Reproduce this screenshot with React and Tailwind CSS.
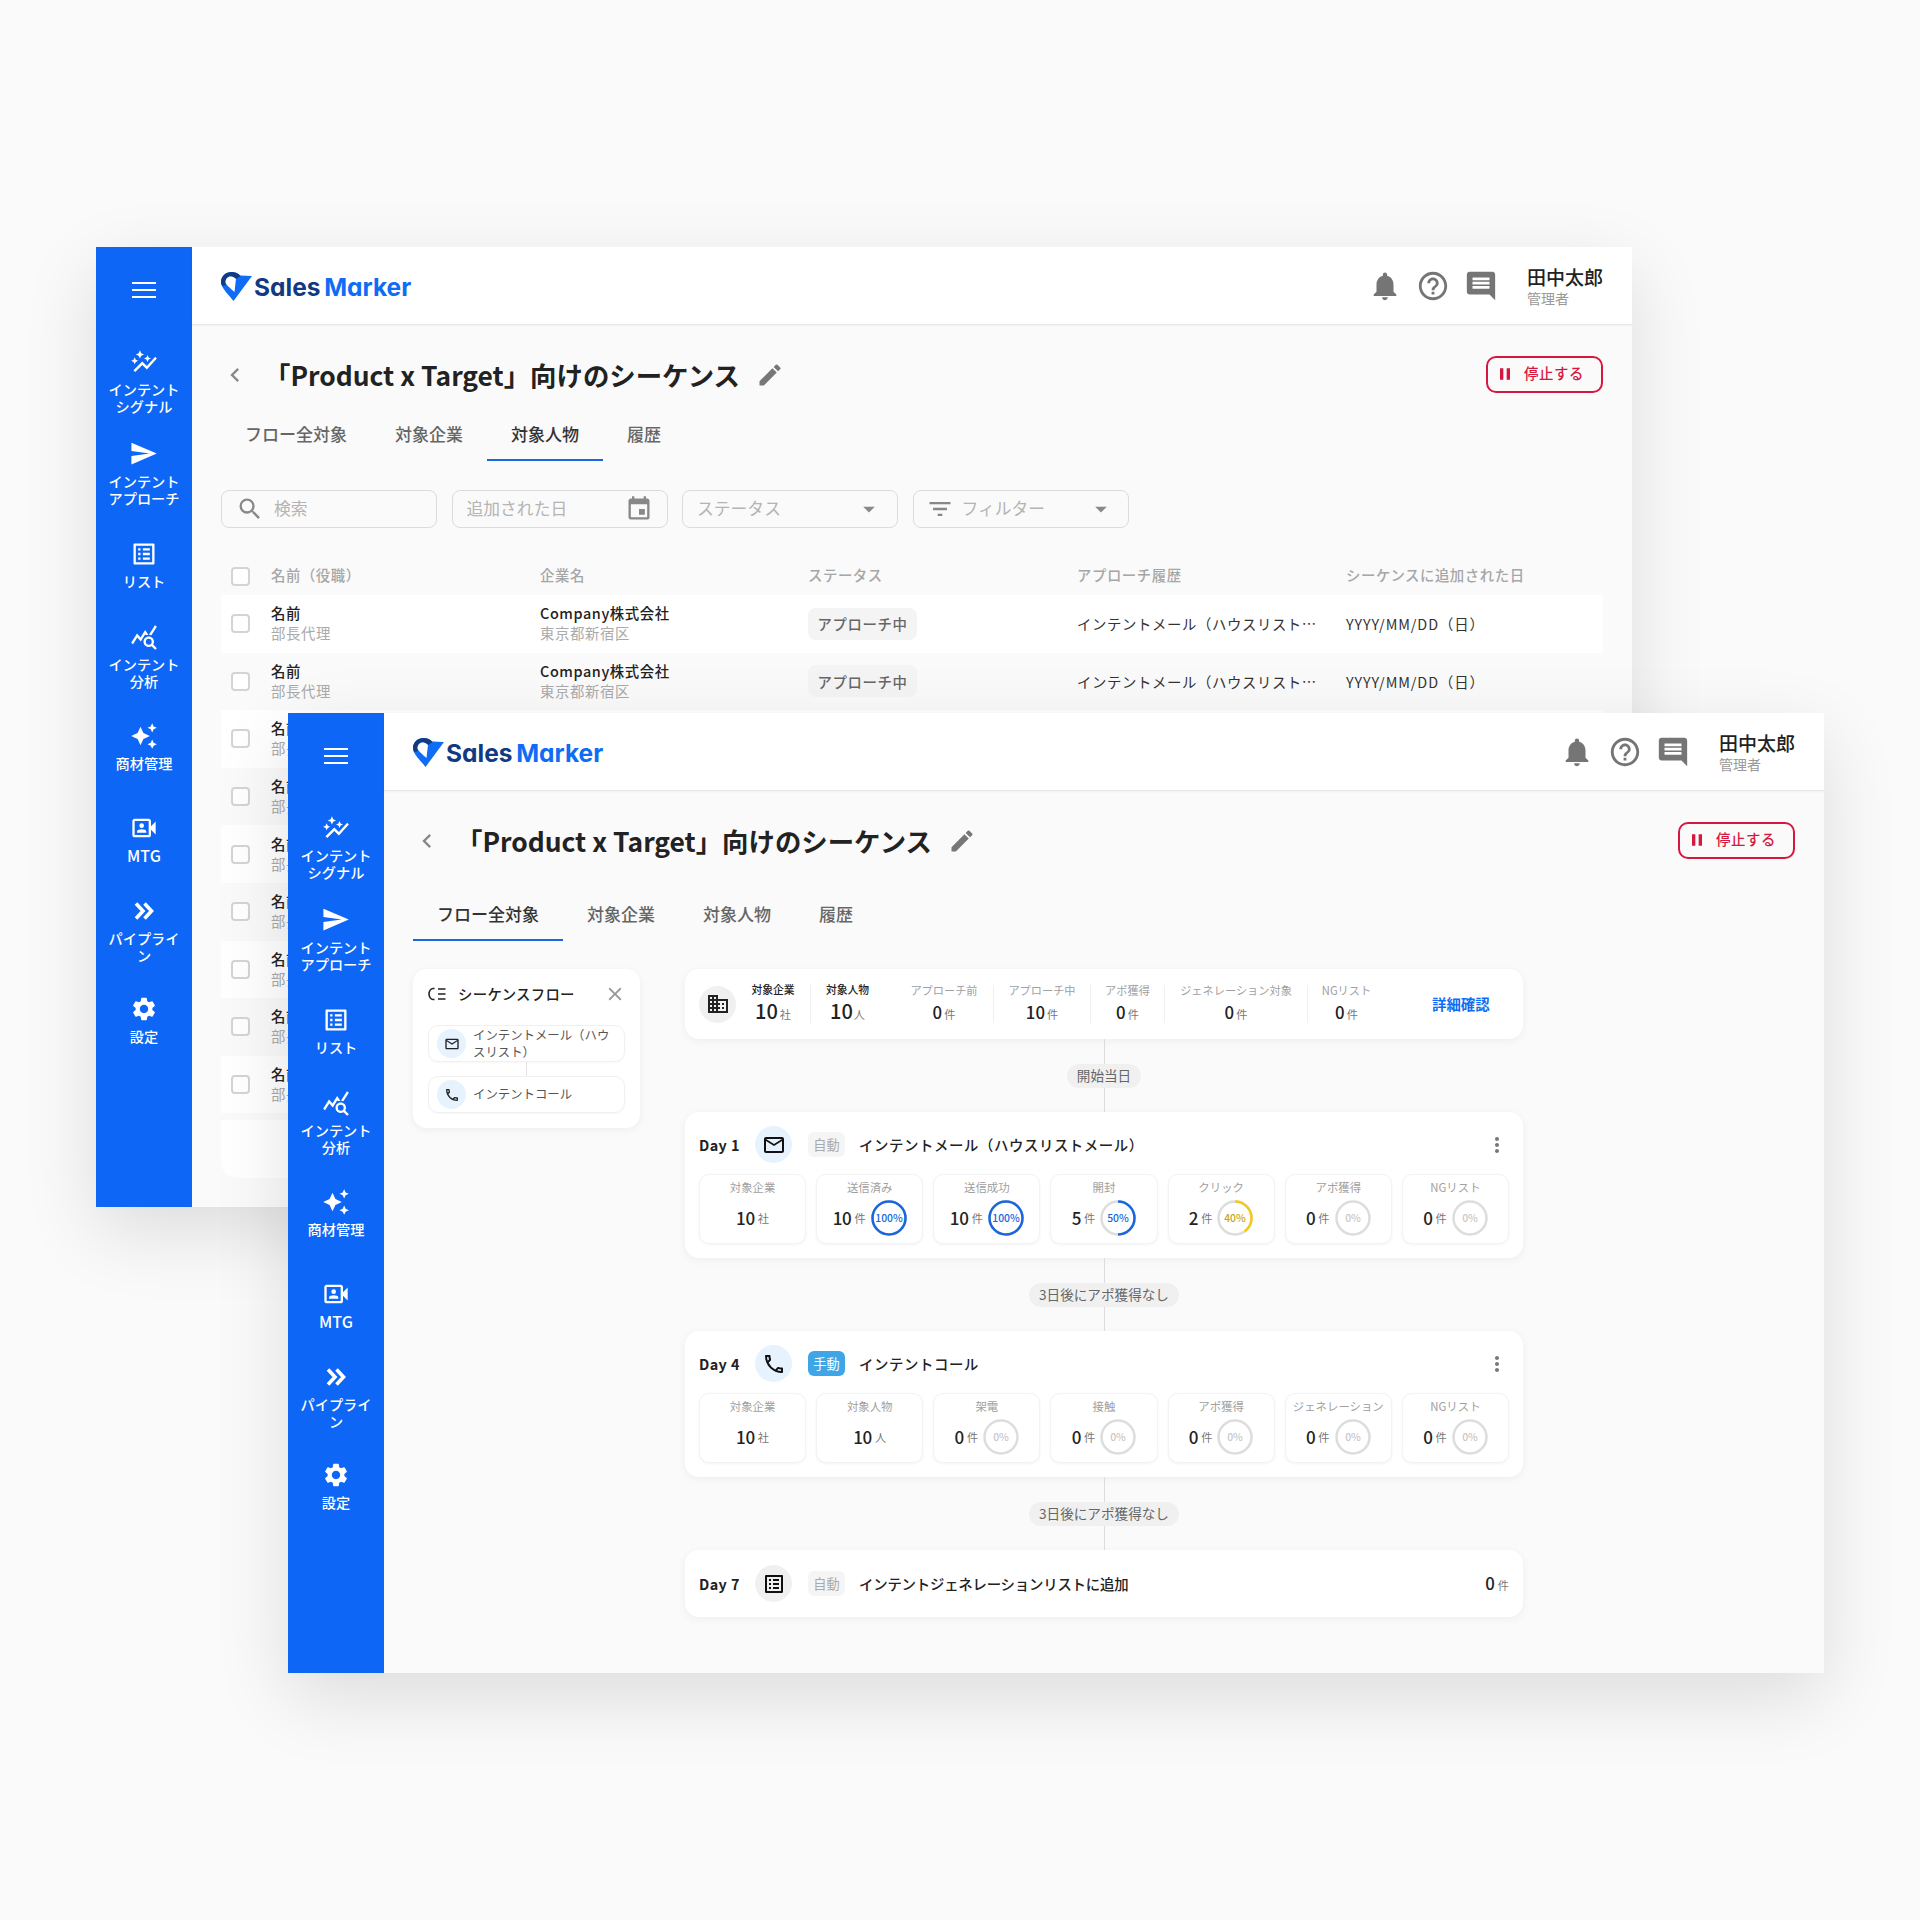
import {
  MdAutoAwesome,
  MdAutoGraph,
  MdArrowDropDown,
  MdChevronLeft,
  MdClose,
  MdComment,
  MdDomain,
  MdEdit,
  MdEvent,
  MdFilterList,
  MdHelpOutline,
  MdMailOutline,
  MdMoreVert,
  MdNotifications,
  MdOutlineListAlt,
  MdOutlinePhone,
  MdOutlineVideoCameraFront,
  MdPause,
  MdQueryStats,
  MdSearch,
  MdSend,
  MdSettings,
} from "react-icons/md";

// fat double chevron, the icon-package one is too thin
function PipelineIcon({ size }) {
  return (
    <svg width={size} height={size} viewBox="0 0 28 28" fill="none" stroke="currentColor" strokeWidth="3.6">
      <path d="M6 6.5L13 14L6 21.5" />
      <path d="M14.5 6.5L21.5 14L14.5 21.5" />
    </svg>
  );
}

const navItems = [
  { icon: MdAutoGraph, lines: ["インテント", "シグナル"], cls: "mt-[44px]" },
  { icon: MdSend, lines: ["インテント", "アプローチ"], cls: "mt-[24px]" },
  { icon: MdOutlineListAlt, lines: ["リスト"], cls: "mt-[33px]" },
  { icon: MdQueryStats, lines: ["インテント", "分析"], cls: "mt-[33px]" },
  { icon: MdAutoAwesome, lines: ["商材管理"], cls: "mt-[32px]" },
  { icon: MdOutlineVideoCameraFront, lines: ["MTG"], cls: "mt-[42px]", labelCls: "text-[16px]" },
  { icon: PipelineIcon, lines: ["パイプライ", "ン"], cls: "mt-[33px]" },
  { icon: MdSettings, lines: ["設定"], cls: "mt-[31px]" },
];

const tabs = ["フロー全対象", "対象企業", "対象人物", "履歴"];

const day1Metrics = [
  { label: "対象企業", value: "10", unit: "社" },
  { label: "送信済み", value: "10", unit: "件", pct: 100, color: "#1a66dc", text: "#1a66dc" },
  { label: "送信成功", value: "10", unit: "件", pct: 100, color: "#1a66dc", text: "#1a66dc" },
  { label: "開封", value: "5", unit: "件", pct: 50, color: "#1a66dc", text: "#1a66dc" },
  { label: "クリック", value: "2", unit: "件", pct: 40, color: "#f5c91a", text: "#c9a516" },
  { label: "アポ獲得", value: "0", unit: "件", pct: 0 },
  { label: "NGリスト", value: "0", unit: "件", pct: 0 },
];

const day4Metrics = [
  { label: "対象企業", value: "10", unit: "社" },
  { label: "対象人物", value: "10", unit: "人" },
  { label: "架電", value: "0", unit: "件", pct: 0 },
  { label: "接触", value: "0", unit: "件", pct: 0 },
  { label: "アポ獲得", value: "0", unit: "件", pct: 0 },
  { label: "ジェネレーション", value: "0", unit: "件", pct: 0 },
  { label: "NGリスト", value: "0", unit: "件", pct: 0 },
];

const summary = [
  { label: "アプローチ前", value: "0", cls: "w-[98px] ml-[11px]" },
  { label: "アプローチ中", value: "10", cls: "w-[97px] border-l" },
  { label: "アポ獲得", value: "0", cls: "w-[74px] border-l" },
  { label: "ジェネレーション対象", value: "0", cls: "w-[143px] border-l" },
  { label: "NGリスト", value: "0", cls: "w-[78px] border-l" },
];

function Logo() {
  return (
    <div className="flex items-center mt-[3px]">
      <svg width="32" height="30" viewBox="0 0 32 30">
        <path d="M0 10C0 4 5 0 10.5 0C14 0 17 1 19 3.5L31 4L12.5 29C8 23 0 16 0 10Z" fill="#0f6cf5" />
        <path d="M0 10C0 4 5 0 10.5 0C14 0 17 1 19.5 4L15 7C13 5 11 4.5 9.5 4.5C6.5 4.5 4.5 7 4.5 10C4.5 11 4.7 12 5 13L1.2 14C0.5 12.5 0 11 0 10Z" fill="#123a82" />
        <path d="M4.5 10C4.5 7 6.5 4.5 9.5 4.5C11 4.5 13 5 15 7L14.5 11L13.5 20C10 16.5 4.5 13 4.5 10Z" fill="#fff" />
      </svg>
      <div className="ml-[1px] text-[24.5px] leading-none font-bold [word-spacing:-2px] font-['Inter',sans-serif] [font-feature-settings:'cv11']">
        <span className="text-[#123a82]">Sales</span>{" "}
        <span className="text-[#0f6cf5]">Marker</span>
      </div>
    </div>
  );
}

function Sidebar() {
  return (
    <aside className="w-24 shrink-0 bg-[#0d66f5] flex flex-col items-center text-white">
      <svg className="mt-[29px] shrink-0" width="28" height="28" viewBox="0 0 28 28" stroke="#fff" strokeWidth="2">
        <path d="M2 7H26M2 14H26M2 21H26" />
      </svg>
      {navItems.map((item) => (
        <div key={item.lines[0] + item.lines.length + item.cls} className={`${item.cls} flex flex-col items-center`}>
          <item.icon size={item.icon === MdSend ? 29 : 28} />
          <div className={`mt-[5px] leading-[17px] font-medium text-center whitespace-nowrap ${item.labelCls || "text-[14.2px]"}`}>
            {item.lines.map((l) => (
              <div key={l}>{l}</div>
            ))}
          </div>
        </div>
      ))}
    </aside>
  );
}

function Header() {
  return (
    <header className="h-[78px] shrink-0 bg-white border-b border-[#e6e6e6] shadow-[0_1px_2px_rgba(0,0,0,0.04)] flex items-center pl-[29px] pr-[29px]">
      <Logo />
      <div className="ml-auto mt-[1px] flex items-center gap-[14px] text-[#757575]">
        <MdNotifications size={34} />
        <MdHelpOutline size={34} />
        <MdComment size={34} />
      </div>
      <div className="ml-[29px] w-[76px]">
        <div className="text-[19px] leading-[24px] font-medium text-[#222]">田中太郎</div>
        <div className="text-[14px] leading-[18px] text-[#999]">管理者</div>
      </div>
    </header>
  );
}

function TitleRow() {
  return (
    <div className="mt-[30px] h-[40px] flex items-center">
      <MdChevronLeft size={28} className="text-[#888]" />
      <h1 className="ml-[15px] text-[26.4px] leading-[40px] font-semibold text-[#222]">
        「Product x Target」向けのシーケンス
      </h1>
      <MdEdit size={28} className="ml-[16px] text-[#777]" />
      <button className="ml-auto mb-[2px] w-[117px] h-[37px] border-2 border-[#d6173f] rounded-[10px] flex items-center pl-[7px] text-[#d6173f] text-[14.4px] font-medium">
        <MdPause size={20} />
        <span className="ml-[9px] mb-[2px] tracking-[0.6px]">停止する</span>
      </button>
    </div>
  );
}

function Tabs({ active, className }) {
  return (
    <div className={`${className} flex h-[52px]`}>
      {tabs.map((t, i) => (
        <div
          key={t}
          className={`px-6 pb-[1px] flex items-center text-[17px] font-medium border-b-2 ${
            i === active ? "border-[#1a66dc] text-[#333]" : "border-transparent text-[#666]"
          }`}
        >
          {t}
        </div>
      ))}
    </div>
  );
}

function Checkbox() {
  return <div className="ml-[10px] w-[19px] h-[19px] rounded-[4px] border-2 border-[#d4d4d4] bg-white" />;
}

function Field({ children }) {
  return (
    <div className="w-[216px] h-[38px] border border-[#dcdcdc] rounded-[8px] flex items-center text-[16.8px] text-[#b4b4b4]">
      {children}
    </div>
  );
}

function PeopleTab() {
  const rows = [0, 1, 2, 3, 4, 5, 6, 7, 8];
  const gridCols = "grid grid-cols-[50px_269px_268px_269px_269px_1fr] items-center";
  return (
    <>
      <Tabs active={2} className="mt-[14px]" />
      <div className="mt-[29px] flex gap-[14.5px]">
        <Field>
          <MdSearch size={28} className="ml-[14px] text-[#888]" />
          <span className="ml-[10px]">検索</span>
        </Field>
        <Field>
          <span className="ml-[14px]">追加された日</span>
          <MdEvent size={28} className="ml-auto mr-[14px] text-[#888]" />
        </Field>
        <Field>
          <span className="ml-[14px]">ステータス</span>
          <MdArrowDropDown size={28} className="ml-auto mr-[14px] text-[#888]" />
        </Field>
        <Field>
          <MdFilterList size={28} className="ml-[12px] text-[#888]" />
          <span className="ml-[8px]">フィルター</span>
          <MdArrowDropDown size={28} className="ml-auto mr-[13px] text-[#888]" />
        </Field>
      </div>
      <div className={`${gridCols} mt-[29px] h-[38px] text-[14.4px] font-medium text-[#a6a6a6] tracking-[0.55px]`}>
        <Checkbox />
        <div className="mb-[2px]">名前（役職）</div>
        <div className="mb-[2px]">企業名</div>
        <div className="mb-[2px]">ステータス</div>
        <div className="mb-[2px]">アプローチ履歴</div>
        <div className="mb-[2px]">シーケンスに追加された日</div>
      </div>
      {rows.map((r) => (
        <div key={r} className={`${gridCols} h-[57.6px] tracking-[0.6px] text-[14.4px] ${r % 2 === 0 ? "bg-white" : "bg-[#fafafa]"}`}>
          <Checkbox />
          {/* rows from the third on sit under the front window, only their start shows */}
          <div className={`leading-[20px] mb-[1px] ${r > 1 ? "w-[17px] overflow-hidden whitespace-nowrap" : ""}`}>
            <div className="font-medium text-[#222]">名前</div>
            <div className="text-[#aaa]">部長代理</div>
          </div>
          {r < 2 && (
            <>
              <div className="leading-[20px] mb-[1px]">
                <div className="font-medium text-[#222]">Company株式会社</div>
                <div className="text-[#aaa]">東京都新宿区</div>
              </div>
              <div className="w-[109px] h-[32px] rounded-[8px] bg-[#f4f4f4] flex items-center justify-center font-medium text-[#666]">
                アプローチ中
              </div>
              <div className="text-[#333]">インテントメール（ハウスリスト…</div>
              <div className="text-[#333] tracking-[0.9px]">YYYY/MM/DD（日）</div>
            </>
          )}
        </div>
      ))}
      <div className="mt-[7px] h-[58px] bg-white rounded-b-[16px]" />
    </>
  );
}

function Ring({ pct, color = "#ddd", text = "#c8c8c8" }) {
  return (
    <svg width="36" height="36" viewBox="0 0 36 36" className="ml-[5px] shrink-0">
      <circle cx="18" cy="18" r="16.5" fill="none" stroke="#ddd" strokeWidth="2.5" />
      {pct > 0 && (
        <circle
          cx="18"
          cy="18"
          r="16.5"
          fill="none"
          stroke={color}
          strokeWidth="2.5"
          pathLength="100"
          strokeDasharray={`${pct} 100`}
          transform="rotate(-90 18 18)"
        />
      )}
      <text x="18" y="21.5" textAnchor="middle" fontSize="10.4" fontWeight="500" fill={text}>
        {pct}%
      </text>
    </svg>
  );
}

function Metric({ label, value, unit, pct, color, text }) {
  return (
    <div className="h-[70px] rounded-[10px] bg-white border border-[#f3f3f3] shadow-[0_1px_3px_rgba(0,0,0,0.05)] flex flex-col items-center">
      <div className="mt-[4px] h-[16px] text-[11.4px] leading-[16px] text-[#a0a0a0] whitespace-nowrap">{label}</div>
      <div className="mt-[5px] h-[36px] flex items-center justify-center">
        <span className="text-[17px] font-medium text-[#222] tracking-[-0.3px]">{value}</span>
        <span className="ml-[3px] text-[11.2px] text-[#777]">{unit}</span>
        {pct !== undefined && <Ring pct={pct} color={color} text={text} />}
      </div>
    </div>
  );
}

function Link({ label }) {
  return (
    <div className="h-[73px] flex flex-col items-center">
      <div className="w-px flex-1 bg-[#dcdcdc]" />
      <div className="h-[24px] px-[10px] rounded-full bg-[#f0f0f0] flex items-center justify-center text-[13.6px] text-[#666]">
        {label}
      </div>
      <div className="w-px flex-1 bg-[#dcdcdc]" />
    </div>
  );
}

function StepHeader({ day, icon: Icon, grey, manual, title, titleCls = "tracking-[0.6px]", children }) {
  return (
    <div className="h-[37px] flex items-center">
      <div className="w-[56px] text-[14.4px] font-semibold text-[#222] tracking-[0.4px]">{day}</div>
      <div className={`w-[37px] h-[37px] rounded-full flex items-center justify-center text-[#111] ${grey ? "bg-[#f0f0f0]" : "bg-[#e6f2fd]"}`}>
        <Icon size={24} />
      </div>
      <div
        className={`ml-[16px] w-[37px] h-[25px] rounded-[6px] flex items-center justify-center text-[13.2px] ${
          manual ? "bg-[#3ea6e6] text-white" : "bg-[#f5f5f5] text-[#aaa]"
        }`}
      >
        {manual ? "手動" : "自動"}
      </div>
      <div className={`ml-[14px] text-[14.4px] font-medium text-[#222] ${titleCls}`}>{title}</div>
      {children}
    </div>
  );
}

function StepCard({ metrics, ...head }) {
  return (
    <div className="rounded-[14px] bg-white shadow-[0_2px_8px_rgba(0,0,0,0.05)] px-[14px] pt-[14px] pb-[14px]">
      <StepHeader {...head}>
        <MdMoreVert size={24} className="ml-auto text-[#777]" />
      </StepHeader>
      <div className="mt-[11px] grid grid-cols-7 gap-[10px]">
        {metrics.map((m) => (
          <Metric key={m.label} {...m} />
        ))}
      </div>
    </div>
  );
}

function SeqItem({ icon: Icon, children }) {
  return (
    <div className="h-[37px] rounded-[10px] border border-[#f0f0f0] flex items-center pl-[8px] pr-[10px] shadow-[0_1px_2px_rgba(0,0,0,0.03)]">
      <div className="w-[29px] h-[29px] rounded-full bg-[#e6f2fd] flex items-center justify-center shrink-0 text-[#222]">
        <Icon size={16} />
      </div>
      <div className="ml-[7px] text-[12.4px] leading-[17px] text-[#555]">{children}</div>
    </div>
  );
}

function FlowTab() {
  return (
    <>
      <Tabs active={0} className="mt-[28px]" />
      <div className="mt-[28px] flex items-start">
        <div className="w-[227px] h-[159px] rounded-[14px] bg-white shadow-[0_2px_8px_rgba(0,0,0,0.05)] px-[15px] pt-[13px]">
          <div className="h-[24px] flex items-center">
            <svg width="18" height="14" viewBox="0 0 18 14" fill="none" stroke="#222" strokeWidth="1.6">
              <path d="M6.5 1.5H5C3 1.5 1 4 1 7C1 10 3 12.5 5 12.5H6.5" />
              <path d="M10 2H17.5M10 7H17.5M10 12H17.5" />
            </svg>
            <div className="ml-[12px] text-[14.4px] font-medium text-[#222] tracking-[0.3px]">シーケンスフロー</div>
            <MdClose size={22} className="ml-auto mr-[-1px] text-[#999]" />
          </div>
          <div className="mt-[19px] flex flex-col">
            <SeqItem icon={MdMailOutline}>インテントメール（ハウスリスト）</SeqItem>
            <div className="h-[14px] w-px bg-[#e4e4e4] self-center" />
            <SeqItem icon={MdOutlinePhone}>インテントコール</SeqItem>
          </div>
        </div>

        <div className="ml-[45px] w-[838px] flex flex-col">
          <div className="h-[70px] rounded-[14px] bg-white shadow-[0_2px_8px_rgba(0,0,0,0.05)] flex items-center pl-[14px]">
            <div className="w-[37px] h-[37px] rounded-full bg-[#f0f0f0] flex items-center justify-center text-[#222]">
              <MdDomain size={24} />
            </div>
            <div className="w-[74px] flex flex-col items-center">
              <div className="text-[10.8px] leading-[16px] font-medium text-[#222]">対象企業</div>
              <div className="mt-[1px] leading-[26px]">
                <span className="text-[20px] font-medium text-[#222]">10</span>
                <span className="ml-[2px] text-[11.2px] text-[#777]">社</span>
              </div>
            </div>
            <div className="w-[74px] h-[38px] border-l border-[#f0f0f0] flex flex-col items-center justify-center">
              <div className="text-[10.8px] leading-[16px] font-medium text-[#222]">対象人物</div>
              <div className="mt-[1px] leading-[26px]">
                <span className="text-[20px] font-medium text-[#222]">10</span>
                <span className="ml-[1px] text-[11.2px] text-[#777]">人</span>
              </div>
            </div>
            {summary.map((s) => (
              <div key={s.label} className={`${s.cls} h-[38px] pb-[3px] border-[#f0f0f0] flex flex-col items-center justify-center`}>
                <div className="text-[11.2px] leading-[16px] text-[#a0a0a0] whitespace-nowrap">{s.label}</div>
                <div className="mt-[4px] leading-[20px]">
                  <span className="text-[16.8px] font-medium text-[#222]">{s.value}</span>
                  <span className="ml-[2px] text-[11.2px] text-[#777]">件</span>
                </div>
              </div>
            ))}
            <div className="ml-[47px] text-[14.4px] font-bold text-[#0f6cf5]">詳細確認</div>
          </div>
          <Link label="開始当日" />
          <StepCard metrics={day1Metrics} day="Day 1" icon={MdMailOutline} title="インテントメール（ハウスリストメール）" />
          <Link label="3日後にアポ獲得なし" />
          <StepCard metrics={day4Metrics} day="Day 4" icon={MdOutlinePhone} manual title="インテントコール" />
          <Link label="3日後にアポ獲得なし" />
          <div className="rounded-[14px] bg-white shadow-[0_2px_8px_rgba(0,0,0,0.05)] px-[14px] py-[15px]">
            <StepHeader day="Day 7" icon={MdOutlineListAlt} grey titleCls="tracking-[-0.2px]" title="インテントジェネレーションリストに追加">
              <div className="ml-auto">
                <span className="text-[16.8px] font-medium text-[#222]">0</span>
                <span className="ml-[3px] text-[11.2px] text-[#777]">件</span>
              </div>
            </StepHeader>
          </div>
        </div>
      </div>
    </>
  );
}

function Window({ className, children }) {
  return (
    <section className={`${className} absolute w-[1536px] h-[960px] flex overflow-hidden bg-[#fafafa] shadow-[0_24px_70px_rgba(0,0,0,0.12)]`}>
      <Sidebar />
      <div className="flex-1 flex flex-col">
        <Header />
        <div className="px-[29px] flex flex-col">
          <TitleRow />
          {children}
        </div>
      </div>
    </section>
  );
}

export default function App() {
  return (
    <div className="relative w-[1920px] h-[1920px] overflow-hidden bg-[#fafafa] font-['Noto_Sans_CJK_JP','Noto_Sans',sans-serif]">
      <Window className="left-[96px] top-[247px]">
        <PeopleTab />
      </Window>
      <Window className="left-[288px] top-[713px]">
        <FlowTab />
      </Window>
    </div>
  );
}
